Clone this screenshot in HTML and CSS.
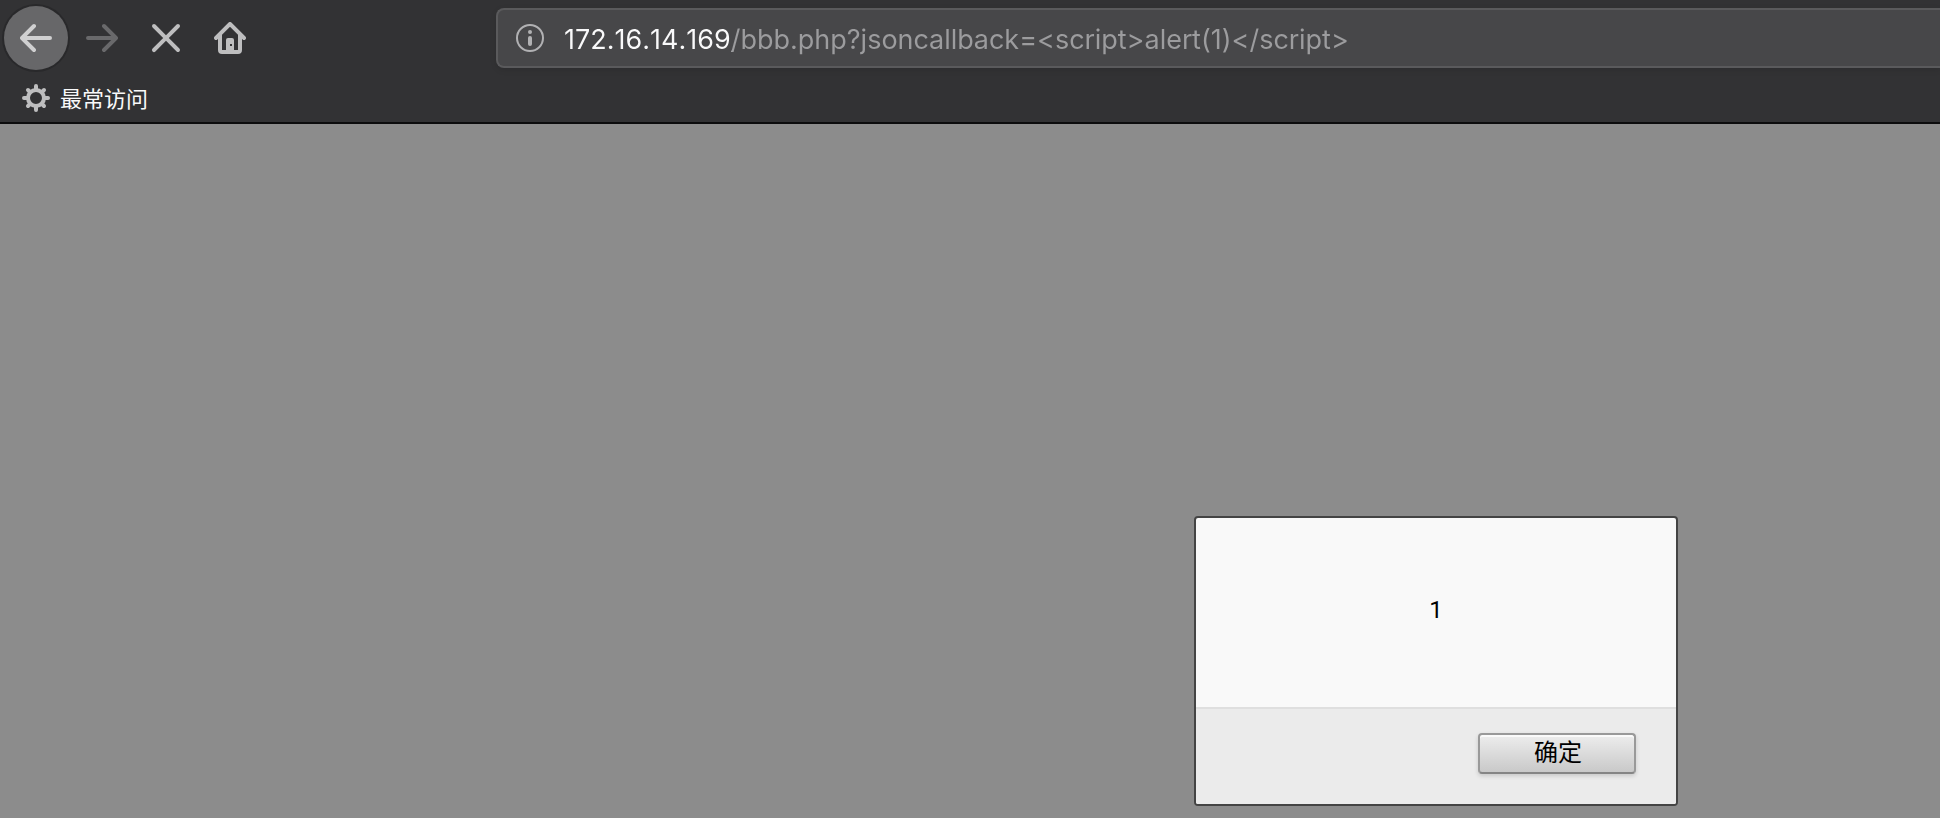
FILE: index.html
```html
<!DOCTYPE html>
<html lang="zh-CN">
<head>
<meta charset="utf-8">
<title>172.16.14.169</title>
<link rel="stylesheet" href="styles.css">
</head>
<body class="window">
<header class="chrome">
  <div class="toolbar">
    <nav class="nav-buttons">
      <button class="nav-button nav-button-back" type="button" aria-label="后退">
        <svg class="icon" viewBox="0 0 16 16"><path d="M15 7H3.414l4.293-4.293a1 1 0 0 0-1.414-1.414l-6 6a1 1 0 0 0 0 1.414l6 6a1 1 0 0 0 1.414-1.414L3.414 9H15a1 1 0 0 0 0-2z"/></svg>
      </button>
      <button class="nav-button" type="button" aria-label="前进" disabled>
        <svg class="icon" viewBox="0 0 16 16"><path transform="matrix(-1 0 0 1 16 0)" d="M15 7H3.414l4.293-4.293a1 1 0 0 0-1.414-1.414l-6 6a1 1 0 0 0 0 1.414l6 6a1 1 0 0 0 1.414-1.414L3.414 9H15a1 1 0 0 0 0-2z"/></svg>
      </button>
      <button class="nav-button" type="button" aria-label="停止">
        <svg class="icon" viewBox="0 0 16 16"><path d="M9.414 8l5.293-5.293a1 1 0 0 0-1.414-1.414L8 6.586 2.707 1.293a1 1 0 0 0-1.414 1.414L6.586 8l-5.293 5.293a1 1 0 1 0 1.414 1.414L8 9.414l5.293 5.293a1 1 0 0 0 1.414-1.414z"/></svg>
      </button>
      <button class="nav-button" type="button" aria-label="主页">
        <svg class="icon" viewBox="0 0 16 16"><path fill-rule="evenodd" d="M15.707 7.293l-7-7a1 1 0 0 0-1.414 0l-7 7a1 1 0 0 0 1.414 1.414L2 8.414V14a2 2 0 0 0 2 2h8a2 2 0 0 0 2-2V8.414l.293.293a1 1 0 0 0 1.414-1.414zM12 14h-2V9a1 1 0 0 0-1-1H7a1 1 0 0 0-1 1v5H4V6.414l4-4 4 4zM8 11v1h1v-1z"/></svg>
      </button>
    </nav>
    <div class="address-bar">
      <svg class="info-icon" viewBox="0 0 28 28" aria-hidden="true"><circle cx="14" cy="14" r="13" fill="none" stroke="currentColor" stroke-width="2"/><circle cx="14" cy="8" r="2" fill="currentColor"/><path d="M14 14v6" fill="none" stroke="currentColor" stroke-width="4" stroke-linecap="round"/></svg>
      <input class="address" type="text" aria-label="地址" spellcheck="false" value="172.16.14.169/bbb.php?jsoncallback=&lt;script&gt;alert(1)&lt;/script&gt;">
    </div>
  </div>
  <div class="bookmarks">
    <button class="bookmark" type="button">
      <svg class="gear-icon" viewBox="0 0 28 28" fill="none" stroke="currentColor" stroke-width="4" stroke-linecap="round" aria-hidden="true"><circle cx="14" cy="14" r="8"/><path d="M14 2v3M14 23v3M2 14h3M23 14h3"/><path d="M6 6l2 2M20 20l2 2M6 22l2-2M20 8l2-2"/></svg>
      <span class="bookmark-label">最常访问</span>
    </button>
  </div>
</header>
<main class="page">
  <dialog class="alert" open aria-labelledby="alert-message">
    <p class="alert-message" id="alert-message">1</p>
    <div class="alert-actions">
      <button class="alert-ok" type="button">确定</button>
    </div>
  </dialog>
</main>
</body>
</html>
```
FILE: styles.css
```css
* {
  box-sizing: border-box;
}

.window {
  margin: 0;
  min-height: 100vh;
  display: flex;
  flex-direction: column;
  overflow: hidden;
  font-family: Roboto, "Noto Sans CJK SC", sans-serif;
}

.chrome {
  background: #323234;
  border-bottom: 2px solid #0c0c0d;
  color: #f9f9fa;
}

.toolbar {
  display: flex;
  align-items: center;
  gap: 234px;
  height: 76px;
  padding-left: 4px;
}

.nav-buttons {
  display: flex;
  flex: none;
}

.nav-button {
  display: grid;
  place-items: center;
  width: 64px;
  height: 64px;
  padding: 0;
  border: 0;
  border-radius: 50%;
  background: none;
  color: #bebebf;
}

.nav-button:disabled {
  color: #69696b;
}

.nav-button-back {
  margin-right: 2px;
  background: #676769;
  box-shadow: 0 0 0 2px #29292b;
  color: #d0d0d1;
}

.icon {
  width: 32px;
  height: 32px;
  fill: currentColor;
}

.address-bar {
  display: flex;
  flex: 1;
  align-items: center;
  gap: 20px;
  min-width: 0;
  height: 60px;
  padding-left: 18px;
  border: 2px solid #5a5a5c;
  border-right: 0;
  border-radius: 8px 0 0 8px;
  background: #474749;
  box-shadow: 0 2px 6px rgba(0, 0, 0, 0.1);
}

.info-icon {
  flex: none;
  width: 28px;
  height: 28px;
  color: #b1b1b3;
}

.address {
  flex: 1;
  min-width: 0;
  height: 48px;
  padding: 2px 0 0;
  border: 0;
  outline: 0;
  background: linear-gradient(to right, #f9f9fa 168px, #9c9c9e 168px);
  background-clip: text;
  -webkit-background-clip: text;
  -webkit-text-fill-color: transparent;
  color: #9c9c9e;
  font: 27px Inter, sans-serif;
  font-kerning: none;
}

.bookmarks {
  display: flex;
  height: 46px;
  padding-left: 22px;
}

.bookmark {
  display: flex;
  align-items: center;
  gap: 10px;
  height: 44px;
  padding: 0;
  border: 0;
  background: none;
  color: inherit;
  font: 22px "Noto Sans CJK SC", sans-serif;
}

.bookmark-label {
  padding-bottom: 2px;
}

.gear-icon {
  width: 28px;
  height: 28px;
  color: #bebebf;
}

.page {
  position: relative;
  flex: 1;
  background: #8c8c8c;
}

.alert {
  position: absolute;
  inset: 392px 262px auto auto;
  width: 484px;
  margin: 0;
  padding: 0;
  overflow: hidden;
  border: 2px solid #444;
  border-radius: 4px;
  background: #f9f9f9;
  color: #000;
}

.alert-message {
  margin: 0;
  padding: 78px 40px 82px;
  font-size: 24px;
  line-height: 29px;
  text-align: center;
}

.alert-actions {
  display: flex;
  justify-content: flex-end;
  padding: 24px 40px 30px;
  border-top: 2px solid #dfdfdf;
  background: #ebebeb;
}

.alert-ok {
  width: 158px;
  height: 41px;
  padding: 0 0 6px 2px;
  border: 2px solid #999;
  border-bottom-color: #858585;
  border-radius: 4px;
  background: linear-gradient(#ededed, #c9c9c9);
  box-shadow: inset 0 2px 0 #fafafa, 0 2px 4px rgba(0, 0, 0, 0.15);
  color: #000;
  font: 24px/31px "Noto Sans CJK SC", sans-serif;
}
```
